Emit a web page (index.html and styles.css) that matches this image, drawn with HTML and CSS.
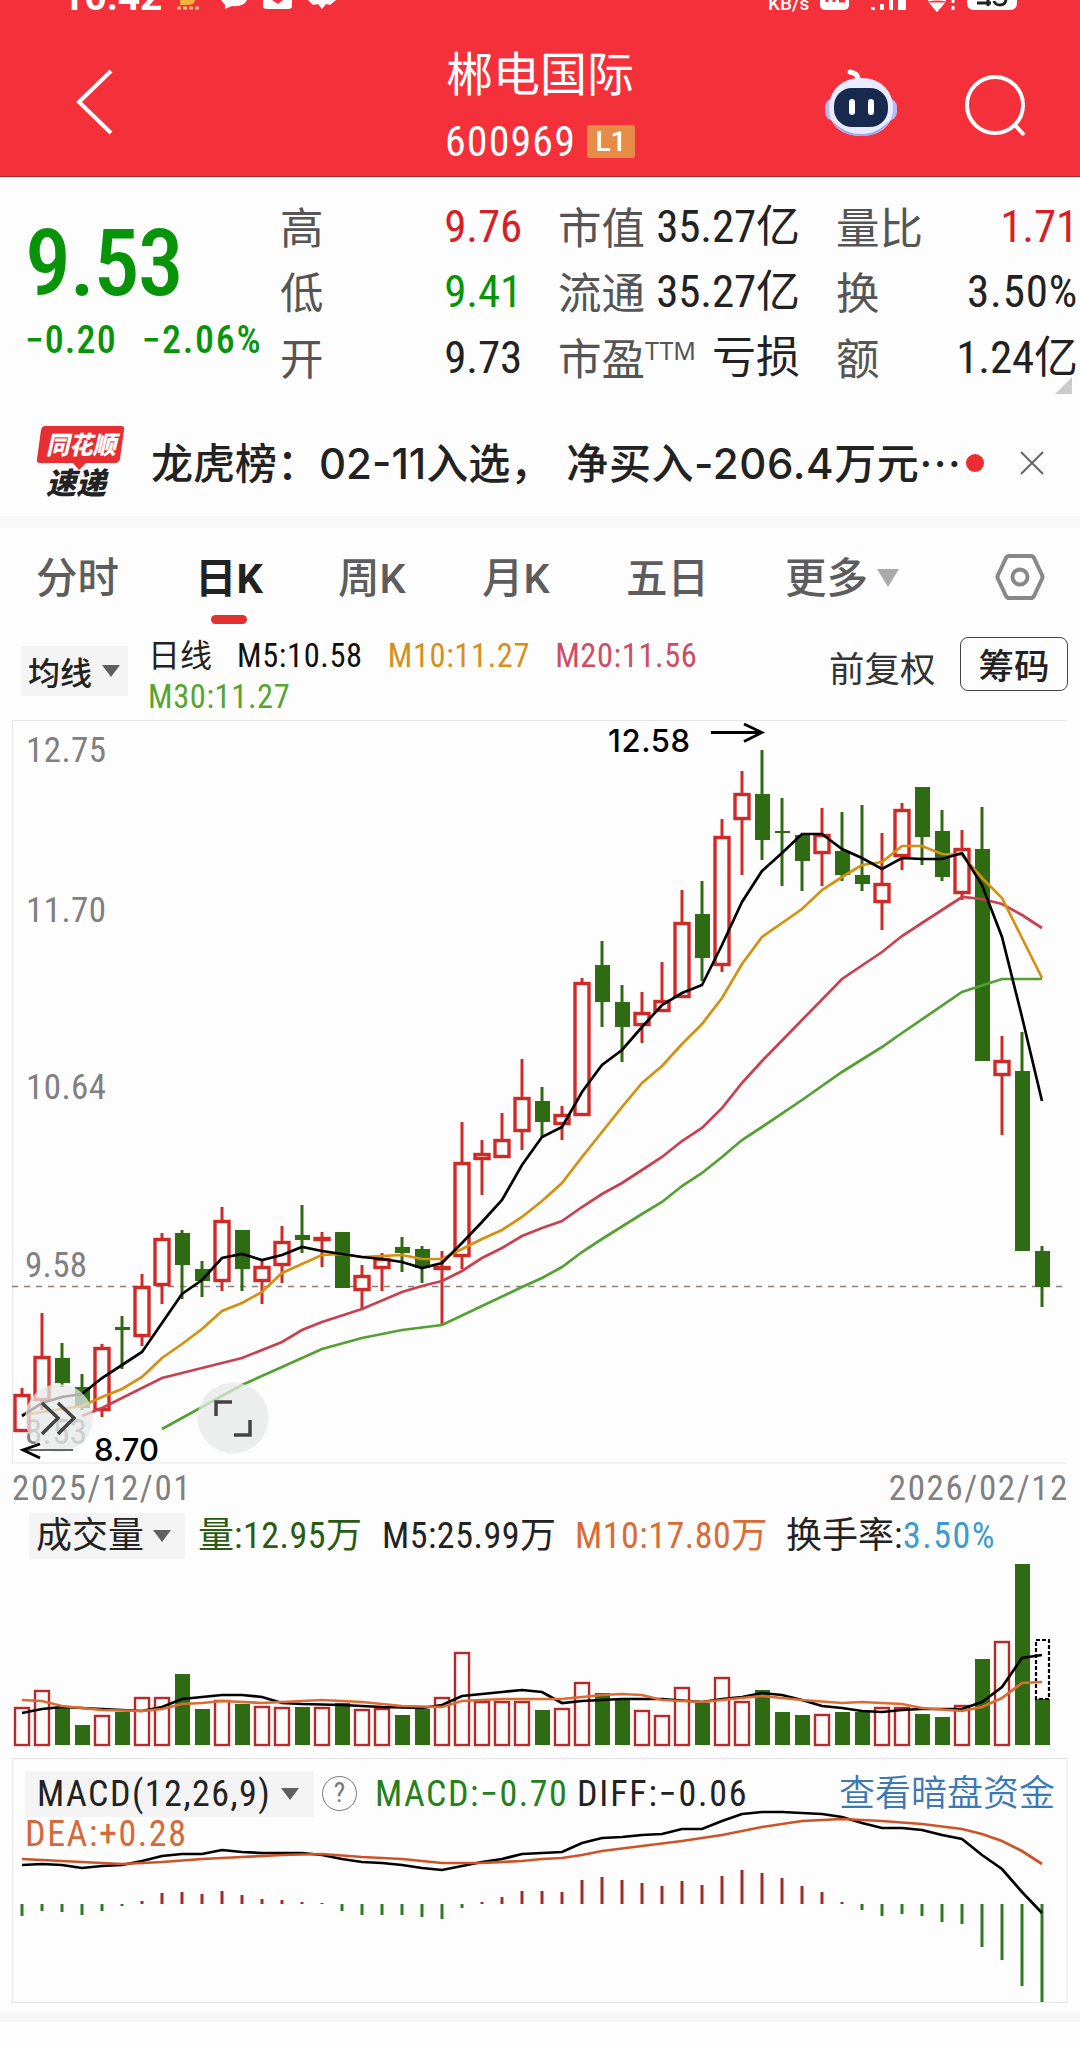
FILE: index.html
```html
<!DOCTYPE html>
<html lang="zh-CN">
<head>
    <meta charset="UTF-8">
    <meta name="viewport" content="width=device-width, initial-scale=1.0">
    <title>郴电国际 600969</title>
    <link rel="stylesheet" href="styles.css">
</head>
<body>
    <header>
        <div class="status">
            <span class="clock">10:42</span>
            <svg class="status-left" width="170" height="12" viewBox="0 0 170 12">
                <path d="M5 0h15q0 5-8 5h-7z" fill="#f6b23c"/>
                <path d="M2 8h22" stroke="#f6c27a" stroke-width="3" stroke-dasharray="4 2"/>
                <path d="M46 0h26q-3 7-15 6l-7 3v-4z" fill="#fff"/>
                <path d="M88 0h29v6q0 3-4 3h-21q-4 0-4-3z" fill="#fff"/>
                <path d="M97 0h11l-5 4z" fill="#f4303a"/>
                <path d="M133 0h28l-6 5-4-1-4 5-4-5-5 1z" fill="#fff"/>
            </svg>
            <span class="speed">KB/s</span>
            <svg class="status-right" width="205" height="12" viewBox="0 0 205 12">
                <path d="M0 0h29v5q0 5-6 5h-17q-6 0-6-5z" fill="#fff"/>
                <path d="M7 0v2M14 0v2M19 1h6" stroke="#f4303a" stroke-width="3"/>
                <path d="M53 7v3M62 4v6M71 0v10M80 0v10M84 0v10" stroke="#fff" stroke-width="4"/>
                <path d="M108 0q9-2 18 0M112 4h10l-5 6zM133 0v3M133 6v4" stroke="#fff" stroke-width="3" fill="#fff"/>
                <path d="M147 0h50v3q0 7-7 7h-36q-7 0-7-7z" fill="#fff"/>
                <path d="M157 3h14M168 0v6M174 1q1 4 6 4t6-5" stroke="#222" stroke-width="3" fill="none"/>
            </svg>
        </div>
        <div class="nav">
            <svg class="back" width="40" height="70" viewBox="0 0 40 70"><path d="M36 4 4 35l32 31" fill="none" stroke="#fff" stroke-width="4"/></svg>
            <div class="title">
                <h1>郴电国际</h1>
                <p><span class="num">600969</span><span class="badge">L1</span></p>
            </div>
            <svg class="robot" width="76" height="72" viewBox="0 0 76 72">
                <path d="M34 14q3-7-7-9" fill="none" stroke="#fff" stroke-width="5" stroke-linecap="round"/>
                <rect x="2" y="31" width="72" height="23" rx="9" fill="#b9b8f5"/>
                <path d="M38 11c20 0 32 13 32 30 0 19-15 28-32 28S6 60 6 41C6 24 18 11 38 11z" fill="#e9ebff"/>
                <path d="M9 53q12 14 29 14t29-14q-8 16-29 16T9 53z" fill="#9ea8ee"/>
                <rect x="11" y="21" width="54" height="39" rx="18" fill="#17294c"/>
                <path d="M29 35v10M48 35v10" stroke="#fff" stroke-width="6" stroke-linecap="round"/>
            </svg>
            <svg class="search" width="62" height="62" viewBox="0 0 62 62"><circle cx="30" cy="30" r="28" fill="none" stroke="#fff" stroke-width="4"/><path d="m49 49 10 11" stroke="#fff" stroke-width="4"/></svg>
        </div>
    </header>

    <section class="quote">
        <div class="price">
            <strong class="num">9.53</strong>
            <p class="num"><span>−0.20</span><span>−2.06%</span></p>
        </div>
        <div class="stats">
            <div><label>高</label><b class="num red">9.76</b></div>
            <div><label>市值</label><b class="num">35.27<i>亿</i></b></div>
            <div><label>量比</label><b class="num red">1.71</b></div>
            <div><label>低</label><b class="num green">9.41</b></div>
            <div><label>流通</label><b class="num">35.27<i>亿</i></b></div>
            <div><label>换</label><b class="num wide">3.50%</b></div>
            <div><label>开</label><b class="num">9.73</b></div>
            <div><label>市盈<sup>TTM</sup></label><b class="num"><i>亏损</i></b></div>
            <div><label>额</label><b class="num">1.24<i>亿</i></b></div>
        </div>
        <span class="corner"></span>
    </section>

    <section class="news">
        <div class="logo">
            <svg width="90" height="46" viewBox="0 0 90 46"><path d="M9 1h76q4 0 3 4l-4 29q-1 4-5 4H50l-7 7-6-7H4q-4 0-3-4L5 5q1-4 4-4z" fill="#e62e33"/><text class="logo-top" x="10" y="29" textLength="70" lengthAdjust="spacingAndGlyphs">同花顺</text></svg>
            <span>速递</span>
        </div>
        <p>龙虎榜：02-11入选，<span>净买入-206.4万元<em>···</em></span></p>
        <span class="dot"></span>
        <svg class="close" width="24" height="24" viewBox="0 0 24 24"><path d="m1 1 22 22M23 1 1 23" stroke="#666" stroke-width="2"/></svg>
    </section>

    <nav class="tabs">
        <a>分时</a>
        <a class="active">日K</a>
        <a>周K</a>
        <a>月K</a>
        <a>五日</a>
        <a>更多<span class="tri light"></span></a>
        <svg width="50" height="48" viewBox="0 0 50 48"><path d="M14 3h22q2 0 3 2l8 17q1 2 0 4l-8 17q-1 2-3 2H14q-2 0-3-2L3 26q-1-2 0-4l8-17q1-2 3-2z" fill="none" stroke="#888" stroke-width="4"/><circle cx="25" cy="24" r="7.500" fill="none" stroke="#888" stroke-width="4"/></svg>
    </nav>

    <section class="ma-bar">
        <span class="pill">均线<span class="tri"></span></span>
        <div class="ma-list num">
            <i>日线</i><span class="m5">M5:10.58</span><span class="m10">M10:11.27</span><span class="m20">M20:11.56</span>
            <span class="m30">M30:11.27</span>
        </div>
        <span class="adjust">前复权</span>
        <button class="chips">筹码</button>
    </section>

    <svg id="kline" class="chart" width="1080" height="744" viewBox="0 720 1080 744">
        <path class="frame" d="M1067 720.500H12.500V1463H1067"/>
        <path d="M12 1286.500H1066" stroke="#8d8078" stroke-width="1.500" stroke-dasharray="6 6"/>
        <g class="axis">
            <text x="26" y="762" textLength="80">12.75</text>
            <text x="26" y="922" textLength="80">11.70</text>
            <text x="26" y="1099" textLength="80">10.64</text>
            <text x="25" y="1277" textLength="62">9.58</text>
            <text x="25" y="1444" textLength="62">8.53</text>
        </g>
        <g class="plot"></g>
        <circle cx="59" cy="1418" r="34" class="float"/>
        <path d="m42 1403 16 15-16 16M58 1403l16 15-16 16" class="glyph"/>
        <circle cx="233" cy="1418" r="35.500" class="float"/>
        <path d="M216 1416v-14h16M250 1420v15h-16" class="glyph"/>
        <path d="M711 732.500h51M744 724l18 8.500-18 9" class="arrow"/>
        <path d="M73 1450H24" stroke="#666" stroke-width="2"/>
        <path d="M40 1444l-17 6 17 8" class="arrow"/>
        <text class="mark" x="608" y="752" textLength="82">12.58</text>
        <text class="mark" x="94" y="1461" textLength="65">8.70</text>
    </svg>
    <div class="dates num"><span>2025/12/01</span><span>2026/02/12</span></div>

    <section class="volume">
        <div class="legend num">
            <span class="pill"><i>成交量</i><span class="tri"></span></span>
            <span class="v"><i>量</i>:12.95<i>万</i></span>
            <span class="v5">M5:25.99<i>万</i></span>
            <span class="v10">M10:17.80<i>万</i></span>
            <span class="rate"><i>换手率</i>:<span>3.50%</span></span>
        </div>
        <svg id="volume" class="chart" width="1080" height="196" viewBox="0 1560 1080 196"></svg>
    </section>

    <section class="macd">
        <div class="legend num">
            <span class="pill">MACD(12,26,9)<span class="tri"></span></span>
            <span class="help">?</span>
            <span class="hist">MACD:−0.70</span>
            <span class="diff">DIFF:−0.06</span>
            <a>查看暗盘资金</a>
        </div>
        <svg id="macd" class="chart" width="1080" height="196" viewBox="0 1808 1080 196">
            <path class="frame" d="M12.500 1758.500H1067V2002.500H12.500z"/>
            <text class="dea" x="25" y="1846" textLength="161">DEA:+0.28</text>
        </svg>
    </section>
    <footer></footer>
    <script src="chart.js"></script>
</body>
</html>
```
FILE: styles.css
```css
* {
    margin: 0;
    padding: 0;
    box-sizing: border-box;
}

body {
    width: 1080px;
    height: 2046px;
    overflow: hidden;
    background-color: #fdfdfd;
    color: #222;
    font-family: "Noto Sans", "Noto Sans CJK SC", sans-serif;
}

i,
em {
    font-style: normal;
}

svg {
    display: block;
    flex: none;
}

.num {
    font-family: Roboto, "Noto Sans CJK SC", sans-serif;
    font-stretch: 85%;
    white-space: nowrap;
}

.red {
    color: #d81f26;
}

.green {
    color: #079408;
}

/* header */
header {
    height: 177px;
    background-color: #f4303a;
    color: #fff;
    border-bottom: 1px solid #b02028;
}

.status {
    display: flex;
    align-items: flex-end;
    height: 12px;
    overflow: hidden;
    padding-left: 62px;
}

.clock {
    width: 113px;
    font: bold 39px/32px Roboto, sans-serif;
    height: 31px;
}

.speed {
    width: 52px;
    margin-left: 423px;
    font: 500 19px/20px Roboto, sans-serif;
    height: 18px;
}

.nav {
    display: flex;
    height: 164px;
}

.back {
    margin: 55px 0 0 75px;
}

.title {
    width: 250px;
    margin: 32px 0 0 300px;
    text-align: center;
}

.title h1 {
    font-size: 47px;
    font-weight: 400;
    line-height: 58px;
}

.title p {
    display: flex;
    align-items: center;
    justify-content: center;
    gap: 11px;
    height: 78px;
}

.title .num {
    font-size: 42px;
    font-weight: 450;
    letter-spacing: 1.1px;
}

.badge {
    width: 48px;
    height: 33px;
    border-radius: 3px;
    background-color: #e78b49;
    text-align: center;
    font: 500 28px/33px Roboto, sans-serif;
}

.robot {
    margin: 55px 0 0 158px;
}

.search {
    margin: 63px 0 0 66px;
}

/* price and stats */
.quote {
    display: flex;
    position: relative;
    height: 233px;
}

.price {
    width: 280px;
    padding: 33px 0 0 25px;
    color: #079408;
}

.price strong {
    display: block;
    font-size: 92px;
    font-weight: 500;
    line-height: 108px;
    letter-spacing: -1.6px;
}

.price p {
    display: flex;
    gap: 25px;
    font-size: 38px;
    font-weight: 500;
    line-height: 44px;
    letter-spacing: 1.1px;
}

.price p span + span {
    letter-spacing: 1.7px;
}

.stats {
    display: grid;
    grid-template-columns: 242px 242px 242px;
    grid-auto-rows: 65.5px;
    column-gap: 36px;
    padding-top: 17px;
}

.stats div {
    display: flex;
    justify-content: space-between;
    align-items: center;
    white-space: nowrap;
}

.stats label {
    color: #555;
    font-size: 43.5px;
    line-height: 64px;
}

.stats sup {
    font-size: 25px;
    line-height: 0;
    vertical-align: 15px;
}

.stats b {
    font-size: 45px;
    font-weight: 450;
    line-height: 64px;
    letter-spacing: -0.2px;
}

.stats .wide {
    letter-spacing: 0.8px;
}

.stats i {
    font-size: 44px;
    font-weight: 400;
    letter-spacing: 0;
}

.corner {
    position: absolute;
    right: 8px;
    bottom: 16px;
    border-left: 17px solid transparent;
    border-bottom: 17px solid #ccc;
}

/* news */
.news {
    display: flex;
    align-items: center;
    height: 118px;
    padding: 0 36px;
    border-bottom: 12px solid #f8f8f8;
}

.logo {
    width: 90px;
    height: 76px;
    margin-right: 25px;
}

.logo-top {
    fill: #fff;
    font-size: 25px;
    font-weight: 900;
    font-style: italic;
}

.logo span {
    display: block;
    margin: -4px 0 0 10px;
    font-size: 30px;
    font-weight: 900;
    font-style: italic;
    line-height: 32px;
}

.news p {
    width: 815px;
    margin-top: 2px;
    font: 500 42px/60px Inter, "Noto Sans CJK SC", sans-serif;
    white-space: nowrap;
}

.news p span {
    margin-left: 14px;
    letter-spacing: 0.6px;
}

.news em {
    letter-spacing: 1.5px;
}

.dot {
    flex: none;
    width: 18px;
    height: 18px;
    border-radius: 50%;
    background-color: #ee2c32;
}

.close {
    margin-left: 36px;
}

/* tabs */
.tabs {
    display: grid;
    grid-template-columns: 159px 143px 144px 144px 159px 210px 50px;
    align-items: center;
    height: 108px;
    padding: 0 0 10px 36px;
}

.tabs a {
    position: relative;
    top: 2px;
    color: #5d5d5d;
    font: 500 41.5px/60px Roboto, "Noto Sans CJK SC", sans-serif;
}

.tabs .active {
    color: #222;
    font-weight: 700;
}

.tabs .active::after {
    content: "";
    position: absolute;
    left: 16px;
    top: 66px;
    width: 36px;
    height: 9px;
    border-radius: 5px;
    background-color: #e23030;
}

.tri {
    display: inline-block;
    border-left: 9px solid transparent;
    border-right: 9px solid transparent;
    border-top: 12px solid #606060;
}

.tri.light {
    margin-left: 9px;
    border-width: 18px 11px 0;
    border-top-color: #aaa;
    vertical-align: 6px;
}

/* moving averages */
.ma-bar {
    display: flex;
    height: 84px;
    padding-left: 21px;
}

.pill {
    display: flex;
    align-items: center;
    justify-content: space-between;
    background-color: #f4f4f4;
}

.ma-bar .pill {
    width: 107px;
    height: 50px;
    margin: 10px 20px 0 0;
    padding: 0 8px 0 7px;
    font-size: 32px;
    font-weight: 500;
}

.ma-list {
    width: 681px;
    font-size: 32.5px;
    font-weight: 450;
    line-height: 40.5px;
    letter-spacing: 0.6px;
}

.ma-list i {
    font-size: 32px;
    font-weight: 400;
    letter-spacing: 0;
}

.ma-list span {
    margin-left: 25px;
}

.ma-list .m30 {
    display: block;
    margin-left: 0;
}

.m5 {
    color: #111;
}

.m10 {
    color: #d4921c;
}

.m20 {
    color: #cf4d63;
}

.m30 {
    color: #56a52f;
}

.adjust {
    width: 131px;
    font-size: 35.5px;
    line-height: 64px;
    color: #333;
}

.chips {
    width: 108px;
    height: 54px;
    margin-top: 1px;
    border: 1.5px solid #444;
    border-radius: 8px;
    background: none;
    color: #222;
    font: 500 35.5px/44px "Noto Sans CJK SC", sans-serif;
}

/* charts */
.chart {
    overflow: visible;
    font-family: Roboto, sans-serif;
}

.frame {
    fill: none;
    stroke: #e6e6e6;
}

.axis {
    fill: #808080;
    font-size: 35px;
    font-stretch: 85%;
}

.float {
    fill: #e6e8e8;
    opacity: 0.75;
}

.glyph {
    fill: none;
    stroke: #444;
    stroke-width: 3.5px;
}

.arrow {
    fill: none;
    stroke: #000;
    stroke-width: 2.8px;
}

.mark {
    font: 500 31px Inter, sans-serif;
    fill: #000;
}

.dates {
    display: flex;
    justify-content: space-between;
    height: 46px;
    padding: 0 11px 0 12px;
    color: #808080;
    font-size: 35px;
    line-height: 49px;
    letter-spacing: 1.6px;
}

.legend {
    display: flex;
    height: 50px;
    font-size: 36px;
    font-weight: 450;
    line-height: 53px;
    letter-spacing: 0.5px;
}

.legend i {
    font-size: 36px;
    font-weight: 400;
    letter-spacing: 0;
}

.volume .pill {
    width: 156px;
    height: 46px;
    margin: 3px 13px 0 29px;
    padding: 0 14px 0 7px;
}

.v {
    width: 184px;
    color: #2b5a12;
}

.v5 {
    width: 193px;
}

.v10 {
    width: 211px;
    color: #d96c35;
}

.rate span {
    color: #3d9bce;
    letter-spacing: 1.5px;
}

.macd {
    margin-top: 2px;
}

.macd .legend {
    padding-top: 10px;
    font-weight: 400;
    line-height: 53px;
    letter-spacing: 1.8px;
}

.macd .pill {
    width: 289px;
    height: 46px;
    margin: 3px 8px 0 25px;
    padding: 0 15px 0 12px;
    letter-spacing: 1.5px;
}

.help {
    width: 35px;
    height: 35px;
    margin: 8px 18px 0 0;
    border: 1.5px solid #777;
    border-radius: 50%;
    color: #777;
    text-align: center;
    font-size: 27px;
    line-height: 33px;
    letter-spacing: 0;
}

.hist {
    width: 202px;
    color: #24801a;
    letter-spacing: 1.5px;
}

.diff {
    width: 262px;
}

.legend a {
    color: #3b78b5;
    font-size: 36px;
    font-weight: 350;
    letter-spacing: 0;
}

.dea {
    fill: #d7683a;
    font-size: 36px;
    font-stretch: 85%;
}

footer {
    height: 10px;
    margin-top: 8px;
    background-color: #f7f7f7;
}
```
FILE: chart.js
```javascript
// [up, high, body top, body bottom, low]
const candles = [
    [1,1388,1394,1432,1432],[1,1313,1356,1401,1410],[0,1343,1358,1383,1387],[0,1374,1387,1408,1410],
    [1,1344,1347,1411,1417],[0,1316,1327,1330,1369],[1,1274,1286,1337,1346],[1,1233,1238,1286,1304],
    [0,1230,1233,1265,1299],[0,1261,1269,1281,1297],[1,1207,1220,1282,1291],[0,1230,1230,1269,1291],
    [1,1260,1266,1282,1304],[1,1226,1241,1266,1283],[0,1205,1235,1240,1253],[1,1232,1237,1241,1267],
    [0,1232,1232,1288,1288],[1,1265,1275,1291,1310],[1,1253,1258,1269,1291],[0,1237,1247,1253,1272],
    [0,1246,1249,1268,1283],[1,1251,1266,1270,1325],[1,1122,1162,1257,1269],[1,1140,1153,1160,1195],
    [1,1113,1139,1158,1158],[1,1059,1097,1132,1150],[0,1087,1101,1122,1137],[1,1106,1114,1125,1140],
    [1,978,982,1116,1116],[0,941,965,1002,1027],[0,985,1002,1027,1062],[1,992,1012,1026,1043],
    [1,962,1000,1012,1012],[1,890,922,998,998],[0,881,914,958,981],[1,819,836,966,972],
    [1,771,793,820,875],[0,750,794,840,860],[0,798,831,833,886],[0,835,835,861,891],
    [1,808,834,854,886],[0,812,851,875,881],[0,805,875,884,891],[1,833,883,903,930],
    [1,803,809,857,870],[0,787,787,837,865],[0,810,831,877,881],[1,830,848,894,900],
    [0,807,849,1061,1061],[1,1036,1060,1076,1135],[0,1032,1071,1251,1251],[0,1246,1251,1287,1307]
];

const volumes = [
    1707,1690,1708,1725,1715,1712,1697,1697,1674,1709,1700,1704,1706,1707,1707,1707,1703,1709,
    1708,1715,1709,1697,1652,1701,1701,1701,1710,1708,1682,1693,1700,1710,1715,1687,1703,1677,
    1701,1690,1712,1715,1714,1712,1712,1707,1707,1714,1717,1705,1659,1641,1564,1699
];

const bars = [
    1916,1911,1912,1915,1911,1906,1901,1893,1892,1894,1891,1895,1899,1900,1902,1903,1911,1915,
    1915,1915,1917,1919,1908,1902,1897,1891,1891,1892,1880,1877,1880,1883,1886,1881,1885,1876,
    1870,1873,1878,1886,1892,1902,1910,1916,1914,1916,1922,1924,1947,1960,1986,2002
];

// lines are index: y, missing days are joined straight
const ma5 = [
    1416,1403,1397,1394,1378,1365,1352,1323,1294,1280,1258,1254,1260,1255,1247,1251,1254,1257,
    1259,1262,1268,1263,1243,1222,1200,1165,1137,1127,1092,1065,1050,1027,1005,993,985,945,902,
    871,853,834,834,849,858,869,858,859,859,853,885,937,1017,1101
];
const ma10 = [
    1415,1412,1409,1406,1397,1389,1377,1358,1344,1329,1311,1303,1292,1273,1264,1255,1254,1257,
    1256,1255,1259,1259,1249,1239,1230,1217,1201,1183,1157,1132,1107,1083,1066,1044,1024,998,964,
    937,923,909,890,877,865,862,846,846,854,855,878,898,938,978
];
const ma20 = {3:1416,4:1408,7:1378,9:1368,11:1358,13:1342,14:1330,15:1322,17:1309,19:1292,20:1286,21:1281,22:1271,
    23:1258,24:1248,25:1236,26:1228,27:1221,28:1207,29:1194,30:1183,31:1170,32:1157,33:1141,34:1128,
    35:1108,36:1083,37:1061,39:1020,41:979,43:952,44:936,45:923,47:897,48:899,49:904,50:915,51:928};
const ma30 = {7:1429,9:1407,11:1385,13:1367,15:1349,17:1338,19:1330,21:1325,23:1306,25:1287,26:1278,27:1267,
    28:1252,29:1239,31:1214,32:1202,33:1186,34:1173,35:1157,36:1140,37:1127,39:1100,41:1072,43:1047,
    44:1033,47:992,49:979,51:979};
const vol5 = {0:1713,1:1709,2:1707,3:1708,4:1709,6:1711,7:1707,8:1699,9:1697,10:1695,11:1695,12:1697,13:1703,
    14:1704,16:1705,18:1707,20:1708,21:1705,22:1696,23:1694,24:1692,25:1690,26:1692,27:1703,28:1701,
    30:1699,32:1699,34:1702,35:1699,36:1697,37:1693,38:1695,39:1700,40:1706,41:1708,42:1711,43:1712,
    44:1710,45:1709,47:1709,48:1702,49:1687,50:1658,51:1655};
const vol10 = {0:1700,1:1701,2:1706,3:1708,4:1710,6:1711,7:1709,8:1704,9:1703,10:1701,12:1703,15:1700,17:1702,
    19:1706,21:1707,22:1701,24:1699,27:1699,28:1697,29:1695,30:1694,31:1695,32:1700,34:1702,36:1698,
    37:1696,39:1700,41:1703,42:1702,44:1704,45:1708,47:1711,48:1707,49:1698,50:1683,51:1682};
const diff = [
    1865,1864,1865,1868,1866,1865,1861,1856,1854,1854,1850,1852,1853,1853,1853,1855,1859,1862,
    1863,1865,1868,1870,1866,1862,1859,1854,1853,1852,1843,1838,1837,1835,1834,1829,1829,1821,
    1814,1812,1812,1813,1814,1817,1823,1828,1828,1830,1835,1839,1855,1869,1892,1913
];
const dea = {0:1859,3:1862,5:1864,7:1862,9:1859,11:1857,13:1855,15:1854,17:1857,19:1859,21:1863,23:1863,25:1861,
    26:1859,27:1858,28:1855,29:1851,31:1846,33:1841,35:1835,37:1827,39:1821,41:1819,43:1821,45:1824,
    47:1829,48:1834,49:1841,50:1851,51:1864};

const red = "#cf2a28";
const green = "#2f6b12";
const x = (i) => 22 + i * 20;

const line = (data, color) => {
    const points = Object.keys(data).map((i) => x(+i) + "," + data[i]).join(" ");
    return `<polyline points="${points}" fill="none" stroke="${color}" stroke-width="2.7"/>`;
};

const stick = (i, from, to, color) =>
    `<path d="M${x(i)} ${from}V${to}" stroke="${color}" stroke-width="3"/>`;

const box = (i, top, bottom, up) => {
    if (up) {
        const h = Math.max(bottom - top - 3, 1);
        return `<rect x="${x(i) - 7}" y="${top + 1.5}" width="14" height="${h}" fill="#fdfdfd" stroke="${red}" stroke-width="3.4"/>`;
    }
    return `<rect x="${x(i) - 7}" y="${top}" width="15" height="${bottom - top}" fill="${green}"/>`;
};

let plot = "";
candles.forEach(([up, high, top, bottom, low], i) => {
    plot += stick(i, high, low, up ? red : green) + box(i, top, bottom, up);
});
plot += line(ma30, "#55a032") + line(ma20, "#c9414f") + line(ma10, "#d4900f") + line(ma5, "#000");
document.querySelector("#kline .plot").innerHTML = plot;

let vol = "";
volumes.forEach((top, i) => {
    const up = candles[i][0];
    vol += up
        ? `<rect x="${x(i) - 7}" y="${top + 1}" width="14" height="${1744 - top}" fill="#fdfdfd" stroke="#b82a2a" stroke-width="2.4"/>`
        : box(i, top, 1745, up);
});
vol += `<rect x="1036" y="1640" width="13" height="59" fill="none" stroke="#000" stroke-width="2.2" stroke-dasharray="4 2"/>`;
vol += line(vol5, "#000") + line(vol10, "#dd6c34");
document.querySelector("#volume").innerHTML = vol;

let macd = "";
bars.forEach((y, i) => {
    macd += stick(i, 1904, y, y < 1904 ? "#a52a24" : "#2e7a22");
});
macd += line(diff, "#000") + line(dea, "#cc5428");
document.querySelector("#macd").innerHTML += macd;
```
